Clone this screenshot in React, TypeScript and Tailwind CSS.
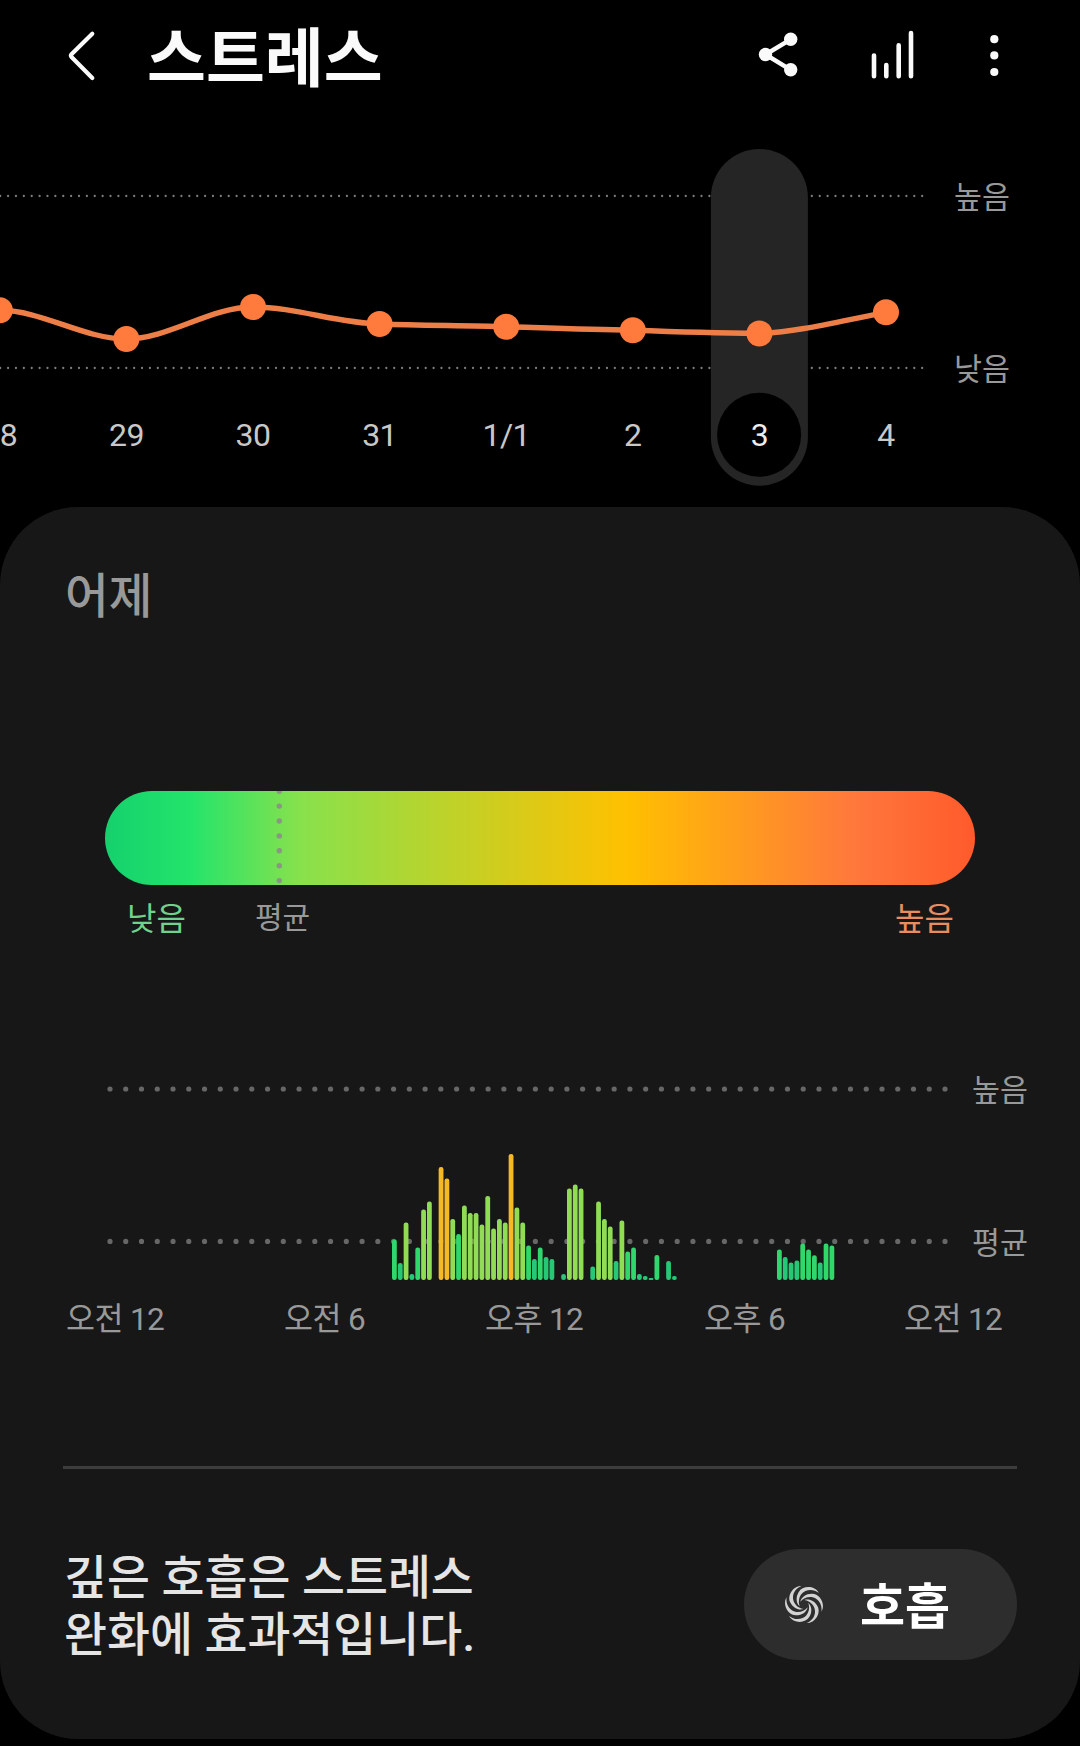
import { useState } from "react";

const days = [
  { label: "28", y: 310.3 },
  { label: "29", y: 339 },
  { label: "30", y: 307 },
  { label: "31", y: 324 },
  { label: "1/1", y: 326.7 },
  { label: "2", y: 330.3 },
  { label: "3", y: 333.5 },
  { label: "4", y: 312.3 },
];

const DAY_STEP = 126.6;

// slot = 10 minute step from the first reading, h = bar height
const readings = [
  [0, 40.5], [1, 17], [2, 57.5], [3, 6], [4, 32.5], [5, 70.5], [6, 78.5],
  [8, 113], [9, 101.5], [10, 61], [11, 46], [12, 74.5], [13, 67], [14, 67], [15, 55.5], [16, 84],
  [17, 51.5], [18, 61], [19, 57.5], [20, 126], [21, 72.5], [22, 57.5], [23, 34.5], [24, 21], [25, 32.5],
  [26, 23], [27, 21], [29, 6], [30, 91.5], [31, 95.5], [32, 91.5], [34, 13.5], [35, 78.5],
  [36, 61], [37, 53.5], [38, 19], [39, 59.5], [40, 28.5], [41, 32.5], [42, 6], [43, 4], [44, 2],
  [45, 25], [47, 19], [48, 4],
  [66, 30.5], [67, 23], [68, 17.5], [69, 19.5], [70, 36.5], [71, 30.5], [72, 24.7], [73, 17.5], [74, 36.5], [75, 34.5],
];

const barColor = (h: number) => {
  if (h > 100) return "#f6b926";
  if (h > 50) return "#90dc55";
  if (h > 24) return "#30d76b";
  return "#26c775";
};

const hours = [
  { label: "오전 12", x: 66 },
  { label: "오전 6", x: 284 },
  { label: "오후 12", x: 485 },
  { label: "오후 6", x: 704 },
  { label: "오전 12", x: 904 },
];

function Header() {
  return (
    <header className="flex h-[110px] items-center pl-[62px] pr-[70px]">
      <button aria-label="뒤로" className="h-[110px]">
        <svg width="40" height="110" viewBox="62 0 40 110" fill="none" stroke="#fafafa" strokeWidth="4.2" strokeLinecap="round" strokeLinejoin="round">
          <path d="M92.3 33.8 L71.5 54.2 Q70.3 55.6 71.5 57 L92.3 78" />
        </svg>
      </button>
      <h1 className="ml-[45px] flex-1 pt-[9px] text-[64px] leading-[101px] font-bold text-[#fafafa]">스트레스</h1>
      <svg width="260" height="110" viewBox="750 0 260 110" fill="#fafafa" stroke="#fafafa">
        <path d="M790.7 39.3 L765.5 54.5 L790.7 69.8" fill="none" strokeWidth="4.4" />
        <g stroke="none">
          <circle cx="790.7" cy="39.3" r="6.7" />
          <circle cx="765.5" cy="54.5" r="6.7" />
          <circle cx="790.7" cy="69.8" r="6.7" />
          <circle cx="994.3" cy="39.2" r="4.1" />
          <circle cx="994.3" cy="55.4" r="4.1" />
          <circle cx="994.3" cy="72" r="4.1" />
        </g>
        <path d="M874 55.6V76.2M886.3 65V76.2M898.7 45.4V76.2M911 33V76.2" strokeWidth="4.6" strokeLinecap="round" />
      </svg>
    </header>
  );
}

function WeekChart({ selected, onSelect }: { selected: number; onSelect: (i: number) => void }) {
  const x = (i: number) => i * DAY_STEP - 0.2;

  return (
    <svg width="1080" height="397" viewBox="0 110 1080 397" className="block">
      <g stroke="#7c7c7c" strokeWidth="2.3" strokeDasharray="0 7.88" strokeLinecap="round">
        <path d="M0.2 196H923" />
        <path d="M0.2 368H923" />
      </g>
      <rect x={x(selected) - 48.5} y="149" width="97" height="336.7" rx="48.5" fill="#252525" />
      <circle cx={x(selected) - 0.3} cy="434.7" r="42" fill="#000" />
      <path
        d="M0 310.3C42 310.3 84 339 126.4 339C168 339 210 307 253 307C295 307 337 323 379.6 324C422 325.5 464 325.4 506.2 326.7C548 328 590 329.5 632.8 330.3C675 331.8 717 333 759.4 333.5C800 332 844 320 886 312.3"
        fill="none"
        stroke="#ee7e47"
        strokeWidth="5.4"
      />
      {days.map((day, i) => (
        <g key={day.label} onClick={() => onSelect(i)} className="cursor-pointer">
          <circle cx={x(i)} cy={day.y} r="13" fill="#ff7b3d" />
          <text x={x(i)} y="446" textAnchor="middle" fontSize="32" letterSpacing="-0.6" fill={i === selected ? "#ededed" : "#c8c8c8"}>
            {day.label}
          </text>
        </g>
      ))}
      <g fontSize="30.4" fill="#999">
        <text x="954" y="207.5">높음</text>
        <text x="954" y="379.5">낮음</text>
      </g>
    </svg>
  );
}

function StressRange() {
  return (
    <div className="mt-[156px] px-[105px]">
      <div className="h-[94px] rounded-full bg-[linear-gradient(90deg,#14d16d_0%,#25e46b_10%,#88e14c_22.5%,#ffc000_60%,#ff783c_86%,#ff5a2b_100%)] pl-[171px]">
        <svg width="7" height="94" viewBox="0 0 7 94">
          <path d="M3.3 0.2V94" stroke="#8a8f86" strokeOpacity="0.9" strokeWidth="5.4" strokeLinecap="round" strokeDasharray="0 14.9" />
        </svg>
      </div>
      <div className="flex pt-2.5 leading-[48px]">
        <span className="ml-[22px] text-[32px] text-[#6fd28d]">낮음</span>
        <span className="ml-[69px] flex-1 text-[30px] leading-[45px] text-[#999]">평균</span>
        <span className="mr-[21px] text-[32px] text-[#e98d60]">높음</span>
      </div>
    </div>
  );
}

function DayChart() {
  return (
    <svg width="1080" height="300" viewBox="0 1050 1080 300" className="block">
      <g stroke="#676767" strokeWidth="5.2" strokeDasharray="0 15.755" strokeLinecap="round">
        <path d="M110 1089H946" />
        <path d="M110 1241.4H946" />
      </g>
      {readings.map(([slot, h]) => (
        <rect
          key={slot}
          x={392 + slot * 5.833}
          y={1280 - h}
          width="4.8"
          height={h}
          rx={Math.min(2.2, h / 2)}
          fill={barColor(h)}
        />
      ))}
      <g fontSize="30.4" fill="#999">
        <text x="972" y="1100.5">높음</text>
        <text x="972" y="1253.5">평균</text>
      </g>
      <g fontSize="31.5" letterSpacing="-0.6" fill="#999">
        {hours.map((hour) => (
          <text key={hour.x} x={hour.x} y="1329.5">
            {hour.label}
          </text>
        ))}
      </g>
    </svg>
  );
}

function BreatheButton() {
  return (
    <button className="flex h-[111px] w-[273px] items-center rounded-full bg-[#2d2d2d] pl-[40px]">
      <svg width="40" height="40" viewBox="-20 -19.5 40 40" fill="#d2d2d2">
        {[0, 60, 120, 180, 240, 300].map((angle) => (
          <path
            key={angle}
            transform={`rotate(${angle})`}
            d="M-2.5 -18.6C-11 -19 -17.5 -8.5 -13.4 -1.5C-10.6 3.6 -5.5 6 -0.5 4.6C-6.5 3.6 -11.6 -1.5 -11 -8C-10.5 -13 -7 -17 -2.5 -18.6Z"
          />
        ))}
      </svg>
      <span className="ml-[36px] pt-[7px] text-[49px] leading-[60px] font-bold text-white">호흡</span>
    </button>
  );
}

export default function App() {
  const [selected, setSelected] = useState(6);

  return (
    <div className="h-[1746px] w-[1080px] overflow-hidden bg-black font-[Roboto,'Noto_Sans_CJK_KR',sans-serif]">
      <Header />
      <WeekChart selected={selected} onSelect={setSelected} />

      <main className="h-[1232px] rounded-[78px] bg-[#171717]">
        <h2 className="pt-[52px] pl-[65px] text-[47.5px] leading-[76px] font-medium text-[#999]">어제</h2>
        <StressRange />
        <div className="mt-[107px]">
          <DayChart />
        </div>

        <div className="mx-[63px] mt-[116px] border-t-[3px] border-[#3c3c3c]" />
        <div className="flex items-start justify-between pr-[63px] pl-[64px]">
          <p className="mt-[81px] text-[46.7px] leading-[57px] font-medium text-[#e5e5e5]">
            깊은 호흡은 스트레스
            <br />
            완화에 효과적입니다.
          </p>
          <div className="mt-[80px]">
            <BreatheButton />
          </div>
        </div>
      </main>
    </div>
  );
}
